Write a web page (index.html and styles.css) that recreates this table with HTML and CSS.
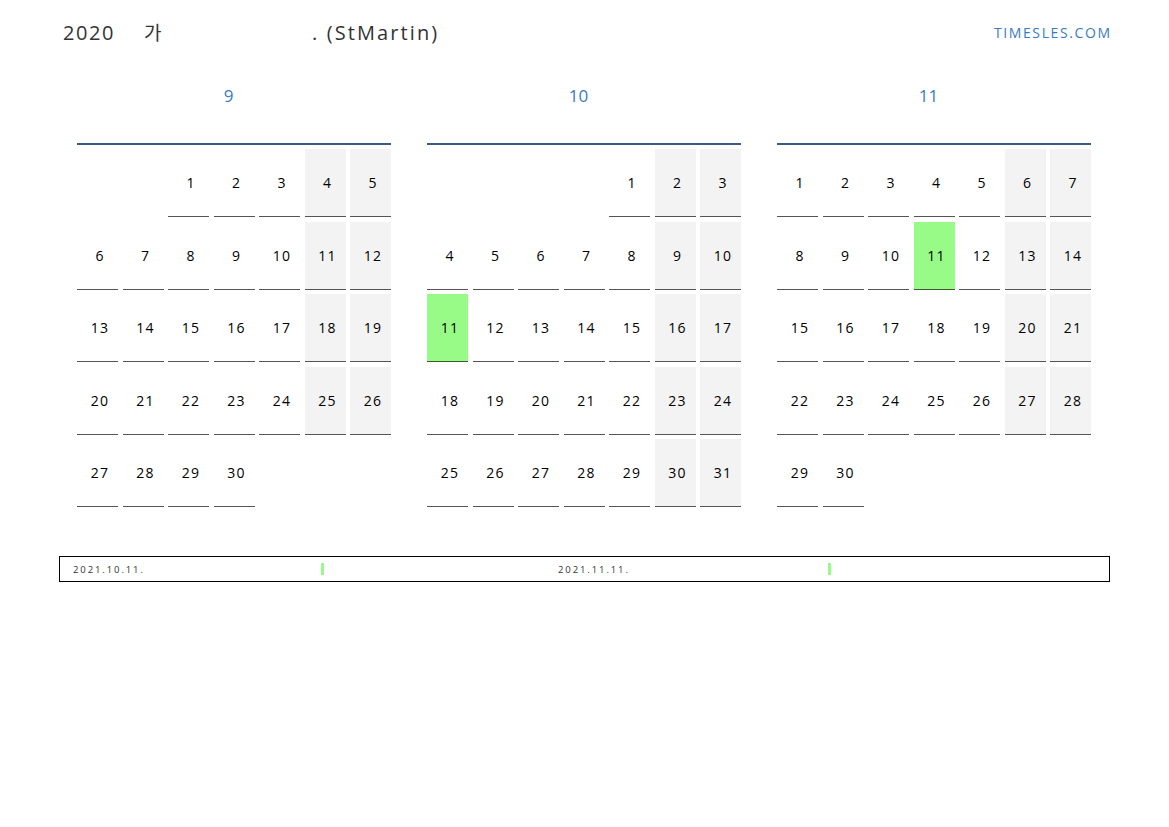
FILE: index.html
```html
<!DOCTYPE html>
<html>
<head>
<meta charset="utf-8">
<link rel="stylesheet" href="styles.css">
</head>
<body>
<div class="page">
  <header class="top">
    <div class="title">2020 <span class="ko">가</span><span class="gap"></span><span class="en">. (StMartin)</span></div>
    <div class="brand">TIMESLES.COM</div>
  </header>

  <div class="months">
    <section class="month">
      <h2 class="mname">9</h2>
      <div class="grid">
        <div class="blank"></div><div class="blank"></div>
        <div class="d">1</div><div class="d">2</div><div class="d">3</div><div class="d we">4</div><div class="d we">5</div>
        <div class="d">6</div><div class="d">7</div><div class="d">8</div><div class="d">9</div><div class="d">10</div><div class="d we">11</div><div class="d we">12</div>
        <div class="d">13</div><div class="d">14</div><div class="d">15</div><div class="d">16</div><div class="d">17</div><div class="d we">18</div><div class="d we">19</div>
        <div class="d">20</div><div class="d">21</div><div class="d">22</div><div class="d">23</div><div class="d">24</div><div class="d we">25</div><div class="d we">26</div>
        <div class="d">27</div><div class="d">28</div><div class="d">29</div><div class="d">30</div>
      </div>
    </section>
    <section class="month">
      <h2 class="mname">10</h2>
      <div class="grid">
        <div class="blank"></div><div class="blank"></div><div class="blank"></div><div class="blank"></div>
        <div class="d">1</div><div class="d we">2</div><div class="d we">3</div>
        <div class="d">4</div><div class="d">5</div><div class="d">6</div><div class="d">7</div><div class="d">8</div><div class="d we">9</div><div class="d we">10</div>
        <div class="d hol">11</div><div class="d">12</div><div class="d">13</div><div class="d">14</div><div class="d">15</div><div class="d we">16</div><div class="d we">17</div>
        <div class="d">18</div><div class="d">19</div><div class="d">20</div><div class="d">21</div><div class="d">22</div><div class="d we">23</div><div class="d we">24</div>
        <div class="d">25</div><div class="d">26</div><div class="d">27</div><div class="d">28</div><div class="d">29</div><div class="d we">30</div><div class="d we">31</div>
      </div>
    </section>
    <section class="month">
      <h2 class="mname">11</h2>
      <div class="grid">
        <div class="d">1</div><div class="d">2</div><div class="d">3</div><div class="d">4</div><div class="d">5</div><div class="d we">6</div><div class="d we">7</div>
        <div class="d">8</div><div class="d">9</div><div class="d">10</div><div class="d hol">11</div><div class="d">12</div><div class="d we">13</div><div class="d we">14</div>
        <div class="d">15</div><div class="d">16</div><div class="d">17</div><div class="d">18</div><div class="d">19</div><div class="d we">20</div><div class="d we">21</div>
        <div class="d">22</div><div class="d">23</div><div class="d">24</div><div class="d">25</div><div class="d">26</div><div class="d we">27</div><div class="d we">28</div>
        <div class="d">29</div><div class="d">30</div>
      </div>
    </section>
  </div>

  <div class="legend">
    <div class="item"><span class="date">2021.10.11.</span><span class="name n1"></span><span class="bar"></span></div>
    <div class="item"><span class="date">2021.11.11.</span><span class="name n2"></span><span class="bar"></span></div>
  </div>
</div>
</body>
</html>
```

FILE: styles.css
```css
html, body {
  margin: 0;
  padding: 0;
  background: #fff;
}
body {
  font-family: "Open Sans", "Noto Sans", "Noto Sans CJK KR", sans-serif;
  color: #000;
}
.page {
  width: 1169px;
  height: 827px;
  box-sizing: border-box;
  padding: 0 59px 0 59px;
}
.top {
  display: flex;
  justify-content: space-between;
  align-items: flex-start;
  height: 62px;
}
.title {
  margin-top: 18px;
  margin-left: 4px;
  font-size: 20px;
  line-height: 28px;
  letter-spacing: 1.6px;
  color: #333;
}
.title .ko {
  font-family: "Noto Sans CJK KR", sans-serif;
  margin-left: 22px;
  font-size: 19px;
}
.title .gap {
  display: inline-block;
  width: 149px;
}
.title .en {
  letter-spacing: 2.1px;
}
.brand {
  margin-top: 24px;
  font-size: 14px;
  line-height: 18px;
  letter-spacing: 1.6px;
  margin-right: -1.6px;
  color: #3a7cc0;
}
.months {
  display: flex;
  gap: 36px;
  padding: 0 18px;
}
.month {
  width: 314px;
}
.mname {
  margin: 0;
  height: 83px;
  box-sizing: border-box;
  padding-top: 22px;
  padding-right: 11px;
  text-align: center;
  font-weight: normal;
  font-size: 17px;
  line-height: 24px;
  color: #3a7cc0;
  border-bottom: 2px solid #3d5a85;
}
.grid {
  display: grid;
  grid-template-columns: repeat(7, 41px);
  column-gap: 4.5px;
  row-gap: 4.5px;
  padding-top: 4px;
}
.d {
  height: 68px;
  box-sizing: border-box;
  border-bottom: 1.5px solid #555;
  display: flex;
  align-items: center;
  justify-content: center;
  font-size: 14px;
  letter-spacing: 1.2px;
  padding-left: 5px;
}
.blank {
  height: 68px;
}
.we {
  background: #f3f3f3;
}
.hol {
  background: #98fb88;
  border-bottom-color: #3d5a30;
}
.legend {
  margin-top: 49px;
  height: 26px;
  box-sizing: border-box;
  border: 1px solid #000;
  display: grid;
  grid-template-columns: 485px 1fr;
  align-items: center;
  padding-left: 13px;
}
.item {
  display: flex;
  align-items: center;
}
.date {
  font-size: 9.5px;
  letter-spacing: 1.9px;
  color: #333;
  width: 74px;
}
.name {
  display: inline-block;
}
.n1 { width: 174px; }
.n2 { width: 196px; }
.bar {
  display: inline-block;
  width: 3px;
  height: 12px;
  background: #98fb88;
}
```
